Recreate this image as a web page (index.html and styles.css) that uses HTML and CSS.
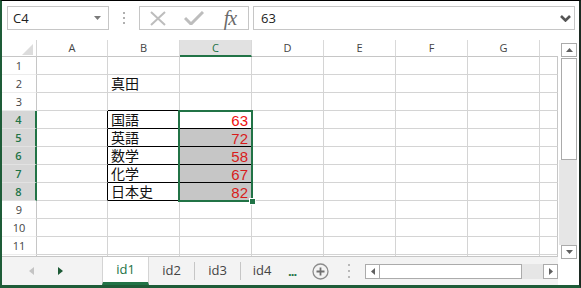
FILE: index.html
```html
<!DOCTYPE html>
<html lang="ja">

<head>
    <meta charset="UTF-8">
    <title>成績表</title>
    <link rel="stylesheet" href="styles.css">
</head>

<body>
    <div class="window">
        <!-- Formula bar -->
        <div class="formula-bar">
            <div class="name-box">
                <span>C4</span>
                <svg class="caret" width="7" height="4" viewBox="0 0 7 4"><path d="M0 0h7L3.5 4z" fill="#7a7a7a"/></svg>
            </div>
            <div class="grip">
                <svg width="2" height="12" viewBox="0 0 2 12"><rect y="0" width="2" height="2" fill="#b0b0b0"/><rect y="5" width="2" height="2" fill="#b0b0b0"/><rect y="10" width="2" height="2" fill="#b0b0b0"/></svg>
            </div>
            <div class="fx-buttons">
                <span class="fx-slot">
                    <svg width="16" height="15" viewBox="0 0 16 15"><path d="M1 1l14 13M15 1L1 14" stroke="#bdbdbd" stroke-width="2" fill="none"/></svg>
                </span>
                <span class="fx-slot">
                    <svg width="20" height="14" viewBox="0 0 20 14"><path d="M1 7l6 6L19 1" stroke="#bdbdbd" stroke-width="3" fill="none"/></svg>
                </span>
                <span class="fx-slot fx">fx</span>
            </div>
            <div class="formula-input">
                <span>63</span>
                <svg class="chevron" width="11" height="7" viewBox="0 0 11 7"><path d="M1 1l4.5 4.5L10 1" stroke="#555" stroke-width="2.6" fill="none"/></svg>
            </div>
        </div>

        <div class="workspace">
            <div class="sheet-col">
                <!-- Grid -->
                <div class="sheet">
                    <div class="row head">
                        <div class="corner"><span class="tri"></span></div>
                        <div class="ch a">A</div><div class="ch">B</div><div class="ch on">C</div><div class="ch">D</div><div class="ch">E</div><div class="ch">F</div><div class="ch">G</div><div class="ch h"></div>
                    </div>
                    <div class="row">
                        <div class="rh">1</div>
                        <div class="c a"></div><div class="c"></div><div class="c"></div><div class="c"></div><div class="c"></div><div class="c"></div><div class="c"></div><div class="c h"></div>
                    </div>
                    <div class="row">
                        <div class="rh">2</div>
                        <div class="c a"></div><div class="c txt">真田</div><div class="c"></div><div class="c"></div><div class="c"></div><div class="c"></div><div class="c"></div><div class="c h"></div>
                    </div>
                    <div class="row">
                        <div class="rh">3</div>
                        <div class="c a"></div><div class="c top"></div><div class="c"></div><div class="c"></div><div class="c"></div><div class="c"></div><div class="c"></div><div class="c h"></div>
                    </div>
                    <div class="row">
                        <div class="rh on">4</div>
                        <div class="c a edge"></div><div class="c txt box">国語</div><div class="c num first">63</div><div class="c"></div><div class="c"></div><div class="c"></div><div class="c"></div><div class="c h"></div>
                    </div>
                    <div class="row">
                        <div class="rh on">5</div>
                        <div class="c a edge"></div><div class="c txt box">英語</div><div class="c num shade">72</div><div class="c"></div><div class="c"></div><div class="c"></div><div class="c"></div><div class="c h"></div>
                    </div>
                    <div class="row">
                        <div class="rh on">6</div>
                        <div class="c a edge"></div><div class="c txt box">数学</div><div class="c num shade">58</div><div class="c"></div><div class="c"></div><div class="c"></div><div class="c"></div><div class="c h"></div>
                    </div>
                    <div class="row">
                        <div class="rh on">7</div>
                        <div class="c a edge"></div><div class="c txt box">化学</div><div class="c num shade">67</div><div class="c"></div><div class="c"></div><div class="c"></div><div class="c"></div><div class="c h"></div>
                    </div>
                    <div class="row">
                        <div class="rh on">8</div>
                        <div class="c a edge"></div><div class="c txt box">日本史</div><div class="c num shade">82</div><div class="c"></div><div class="c"></div><div class="c"></div><div class="c"></div><div class="c h"></div>
                    </div>
                    <div class="row">
                        <div class="rh">9</div>
                        <div class="c a"></div><div class="c"></div><div class="c"></div><div class="c"></div><div class="c"></div><div class="c"></div><div class="c"></div><div class="c h"></div>
                    </div>
                    <div class="row">
                        <div class="rh">10</div>
                        <div class="c a"></div><div class="c"></div><div class="c"></div><div class="c"></div><div class="c"></div><div class="c"></div><div class="c"></div><div class="c h"></div>
                    </div>
                    <div class="row">
                        <div class="rh">11</div>
                        <div class="c a"></div><div class="c"></div><div class="c"></div><div class="c"></div><div class="c"></div><div class="c"></div><div class="c"></div><div class="c h"></div>
                    </div>
                    <div class="row">
                        <div class="rh"></div>
                        <div class="c a"></div><div class="c"></div><div class="c"></div><div class="c"></div><div class="c"></div><div class="c"></div><div class="c"></div><div class="c h"></div>
                    </div>

                    <!-- Selected range C4:C8 -->
                    <div class="selection"><span class="handle"></span></div>
                </div>

                <!-- Sheet tabs -->
                <div class="tabbar">
                    <div class="tab-nav">
                        <svg width="5" height="8" viewBox="0 0 5 8"><path d="M5 0v8L0 4z" fill="#c4c4c4"/></svg>
                        <svg class="next" width="5" height="8" viewBox="0 0 5 8"><path d="M0 0v8l5-4z" fill="#1d5a36"/></svg>
                    </div>
                    <div class="tab active">id1</div>
                    <div class="tab w45">id2</div>
                    <span class="tab-sep"></span>
                    <div class="tab w45">id3</div>
                    <span class="tab-sep"></span>
                    <div class="tab w42">id4</div>
                    <div class="more">...</div>
                    <svg class="add" width="17" height="17" viewBox="0 0 17 17"><circle cx="8.5" cy="8.5" r="7.5" stroke="#8c8c8c" stroke-width="1.3" fill="none"/><path d="M8.5 4.5v8M4.5 8.5h8" stroke="#707070" stroke-width="1.8"/></svg>
                    <svg class="hgrip" width="2" height="14" viewBox="0 0 2 14"><rect y="0" width="2" height="2" fill="#b8b8b8"/><rect y="6" width="2" height="2" fill="#b8b8b8"/><rect y="12" width="2" height="2" fill="#b8b8b8"/></svg>
                    <div class="hscroll">
                        <div class="sb-btn"><svg width="4" height="7" viewBox="0 0 4 7"><path d="M4 0v7L0 3.5z" fill="#606060"/></svg></div>
                        <div class="sb-thumb"></div>
                        <div class="sb-track"></div>
                        <div class="sb-btn"><svg width="4" height="7" viewBox="0 0 4 7"><path d="M0 0v7l4-3.5z" fill="#606060"/></svg></div>
                    </div>
                </div>
            </div>

            <!-- Vertical scroll bar -->
            <div class="vscroll">
                <div class="vs-btn"><svg width="7" height="4" viewBox="0 0 7 4"><path d="M0 4h7L3.5 0z" fill="#606060"/></svg></div>
                <div class="vs-thumb"></div>
                <div class="vs-track"></div>
                <div class="vs-btn"><svg width="7" height="4" viewBox="0 0 7 4"><path d="M0 0h7L3.5 4z" fill="#606060"/></svg></div>
            </div>
        </div>
    </div>
</body>

</html>
```

FILE: styles.css
```css
body {
    margin: 0;
    font-family: 'Open Sans', 'Liberation Sans', sans-serif;
    background: #fff;
}

.window {
    width: 581px;
    height: 288px;
    box-sizing: border-box;
    border-top: 1px solid #000;
    border-left: 2px solid #1e5c38;
    border-right: 2px solid #1c2a22;
    border-bottom: 3px solid #1e5c38;
    display: flex;
    flex-direction: column;
    overflow: hidden;
}

/* Formula bar */
.formula-bar {
    height: 39px;
    box-sizing: border-box;
    padding: 5px 4px 0 5px;
    display: flex;
    align-items: flex-start;
}

.name-box {
    width: 102px;
    height: 24px;
    box-sizing: border-box;
    border: 1px solid #c6c6c6;
    display: flex;
    align-items: center;
    justify-content: space-between;
    padding: 0 7px 0 5px;
    font-size: 13px;
    color: #222;
}

.grip {
    width: 30px;
    height: 24px;
    display: flex;
    align-items: center;
    justify-content: center;
}

.fx-buttons {
    width: 110px;
    height: 24px;
    box-sizing: border-box;
    border: 1px solid #c6c6c6;
    display: flex;
    align-items: center;
}

.fx-slot {
    width: 36px;
    display: flex;
    justify-content: center;
    align-items: center;
}

.fx {
    font-family: 'Liberation Serif', serif;
    font-style: italic;
    font-size: 20px;
    line-height: 22px;
    color: #6a6a6a;
    letter-spacing: -1px;
}

.formula-input {
    flex: 1;
    height: 24px;
    margin-left: 4px;
    box-sizing: border-box;
    border: 1px solid #c6c6c6;
    display: flex;
    align-items: center;
    justify-content: space-between;
    padding: 0 3px 0 7px;
    font-size: 13px;
    color: #222;
}

/* Sheet area */
.workspace {
    flex: 1;
    display: flex;
}

.sheet-col {
    width: 556px;
    display: flex;
    flex-direction: column;
}

.sheet {
    position: relative;
    height: 216px;
    overflow: hidden;
}

.row {
    display: flex;
    height: 18px;
}

.row.head {
    height: 17px;
}

.corner {
    width: 35px;
    box-sizing: border-box;
    border-right: 1px solid #d4d4d4;
    border-bottom: 1px solid #c6c6c6;
    display: flex;
    justify-content: flex-end;
    align-items: flex-end;
    padding: 0 3px 1px 0;
}

.tri {
    width: 0;
    height: 0;
    border-left: 11px solid transparent;
    border-bottom: 11px solid #dcdcdc;
}

.ch {
    width: 72px;
    box-sizing: border-box;
    border-right: 1px solid #d9d9d9;
    border-bottom: 1px solid #c6c6c6;
    text-align: center;
    font-size: 11px;
    line-height: 16px;
    color: #444;
}

.ch.on {
    background: #e1e1e1;
    color: #217346;
    border-bottom: 2px solid #217346;
}

.rh {
    width: 35px;
    box-sizing: border-box;
    border-right: 1px solid #c6c6c6;
    border-bottom: 1px solid #ececec;
    text-align: center;
    font-size: 11px;
    line-height: 18px;
    color: #444;
}

.rh.on {
    background: #d6d6d6;
    color: #217346;
    font-weight: 600;
    border-right: 2px solid #217346;
    border-bottom-color: #e2e2e2;
}

.c {
    width: 72px;
    box-sizing: border-box;
    border-right: 1px solid #d4d4d4;
    border-bottom: 1px solid #d4d4d4;
    overflow: hidden;
}

.a {
    width: 71px;
}

.h {
    width: 18px;
    border-right-color: #c6c6c6;
}

.ch.h {
    border-right: none;
}

.txt {
    font-family: 'Noto Sans CJK JP', sans-serif;
    font-size: 14px;
    line-height: 17px;
    padding-left: 3px;
    color: #111;
    white-space: nowrap;
}

.top {
    border-bottom-color: #000;
}

.edge {
    border-right-color: #000;
}

.box {
    border-right-color: #000;
    border-bottom-color: #000;
}

.num {
    font-family: 'Liberation Sans', Arial, sans-serif;
    font-size: 15px;
    line-height: 19px;
    text-align: right;
    padding-right: 3px;
    color: #ee1111;
    border-bottom-color: #000;
}

.num.shade {
    background: #c6c6c6;
    color: #d81c1c;
}

.selection {
    position: absolute;
    left: 176px;
    top: 70px;
    width: 75px;
    height: 92px;
    box-sizing: border-box;
    border: 2px solid #217346;
}

.handle {
    position: absolute;
    right: -5px;
    bottom: -5px;
    width: 5px;
    height: 5px;
    background: #217346;
    border: 1px solid #fff;
}

/* Sheet tabs */
.tabbar {
    flex: 1;
    box-sizing: border-box;
    border-top: 1px solid #c6c6c6;
    background: #f3f3f3;
    display: flex;
    align-items: center;
}

.tab-nav {
    width: 100px;
    display: flex;
    align-items: center;
    padding-left: 27px;
    box-sizing: border-box;
}

.tab-nav .next {
    margin-left: 24px;
}

.tab {
    width: 45px;
    align-self: stretch;
    text-align: center;
    font-size: 13px;
    line-height: 27px;
    color: #444;
}

.tab.active {
    width: 47px;
    background: #fff;
    color: #217346;
    box-sizing: border-box;
    border-left: 1px solid #d4d4d4;
    border-right: 1px solid #d4d4d4;
    border-bottom: 3px solid #217346;
    line-height: 24px;
}

.tab.w42 {
    width: 42px;
}

.tab-sep {
    width: 1px;
    height: 18px;
    background: #c6c6c6;
}

.more {
    margin-left: 5px;
    width: 12px;
    font-size: 13px;
    font-weight: 700;
    color: #217346;
    letter-spacing: -1px;
    line-height: 18px;
}

.add {
    margin-left: 12px;
}

.hgrip {
    margin-left: 19px;
}

.hscroll {
    margin-left: 15px;
    height: 15px;
    display: flex;
}

.sb-btn {
    width: 15px;
    box-sizing: border-box;
    border: 1px solid #ababab;
    background: #fff;
    display: flex;
    align-items: center;
    justify-content: center;
}

.sb-thumb {
    width: 142px;
    box-sizing: border-box;
    border: 1px solid #ababab;
    border-left: none;
    background: #fff;
}

.sb-track {
    width: 21px;
    background: #e6e6e6;
}

/* Vertical scroll bar */
.vscroll {
    width: 21px;
    box-sizing: border-box;
    padding: 3px 2px 0 1px;
    display: flex;
    flex-direction: column;
}

.vs-btn {
    width: 16px;
    height: 14px;
    margin-left: 2px;
    box-sizing: border-box;
    border: 1px solid #ababab;
    background: #fff;
    display: flex;
    align-items: center;
    justify-content: center;
}

.vs-thumb {
    width: 16px;
    height: 102px;
    margin: 1px 0 0 2px;
    box-sizing: border-box;
    border: 1px solid #ababab;
    background: #fff;
}

.vs-track {
    height: 85px;
    background: #e6e6e6;
}
```
